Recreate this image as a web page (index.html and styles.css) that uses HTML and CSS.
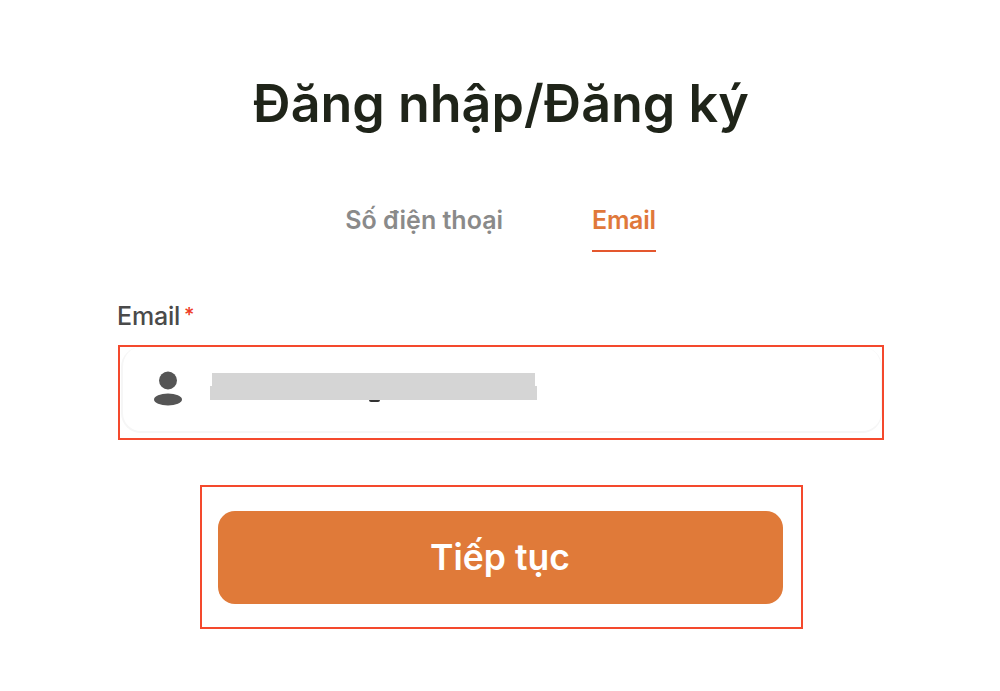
FILE: index.html
```html
<!DOCTYPE html>
<html lang="vi">
<head>
<meta charset="utf-8">
<title>Đăng nhập/Đăng ký</title>
<link rel="stylesheet" href="styles.css">
</head>
<body>
<main class="page">
  <h1 class="title">Đăng nhập/Đăng ký</h1>
  <nav class="tabs">
    <span class="tab">Số điện thoại</span>
    <span class="tab tab-active">Email</span>
  </nav>
  <section class="form">
    <label class="label">Email<span class="req">*</span></label>
    <div class="field-outline">
      <div class="field">
        <svg class="user-icon" viewBox="0 0 28 35" width="28" height="35" aria-hidden="true">
          <circle cx="14" cy="9.5" r="9" fill="#555555"/>
          <ellipse cx="14" cy="28.5" rx="14" ry="6" fill="#555555"/>
        </svg>
        <div class="value">
          <span class="redact redact-top"></span>
          <span class="redact redact-bottom"></span>
          <span class="descender"></span>
        </div>
      </div>
    </div>
    <div class="button-outline">
      <button class="submit" type="button">Tiếp tục</button>
    </div>
  </section>
</main>
</body>
</html>
```
FILE: styles.css
```css
* { box-sizing: border-box; }
html, body { margin: 0; padding: 0; background: #ffffff; }
body { width: 1000px; height: 691px; overflow: hidden; font-family: "Inter", "Noto Sans", "Liberation Sans", sans-serif; }
.page { display: flex; flex-direction: column; align-items: center; padding-top: 71px; }
.title { margin: 0; height: 66px; line-height: 66px; font-size: 52px; font-weight: 600; color: #1f2419; letter-spacing: 0; padding-left: 2px; }
.tabs { display: flex; gap: 89px; margin-top: 65px; padding-left: 1px; }
.tab { display: block; height: 50px; padding-top: 3px; line-height: 30px; font-size: 25px; font-weight: 600; color: #8a8a8a; letter-spacing: 0; }
.tab-active { color: #e0783a; border-bottom: 2px solid #e4572e; letter-spacing: -0.3px; }
.form { width: 766px; margin-top: 49px; margin-left: 2px; display: flex; flex-direction: column; }
.label { height: 30px; line-height: 30px; font-size: 25px; font-weight: 500; color: #4a4a4a; letter-spacing: -0.2px; margin-left: -1px; }
.req { color: #ee3a24; font-size: 20px; margin-left: 4px; position: relative; top: -3px; }
.field-outline { height: 95px; margin-top: 14px; border: 2px solid #f4492d; padding: 0 0 5px 1px; }
.field { height: 100%; border: 2px solid #f6f6f6; border-top-width: 0; border-right-width: 1px; border-radius: 20px; display: flex; align-items: center; padding-left: 31px; background: #ffffff; }
.user-icon { flex: none; margin-top: -1px; }
.value { position: relative; width: 327px; height: 34px; margin-left: 28px; margin-top: -1px; }
.redact { position: absolute; background: #d5d5d5; }
.redact-top { left: 2px; top: 1px; width: 323px; height: 14px; }
.redact-bottom { left: 0; top: 14px; width: 327px; height: 14px; }
.descender { position: absolute; left: 159px; top: 28px; width: 11px; height: 2px; background: #333333; border-radius: 0 0 5px 5px; }
.button-outline { align-self: center; width: 603px; height: 144px; margin-top: 45px; border: 2px solid #f4492d; padding: 24px 18px 0 16px; }
.submit { display: block; width: 100%; height: 93px; border: 0; border-radius: 17px; background: #e07a39; color: #ffffff; font-family: inherit; font-size: 35.5px; font-weight: 600; letter-spacing: 0; }
```
